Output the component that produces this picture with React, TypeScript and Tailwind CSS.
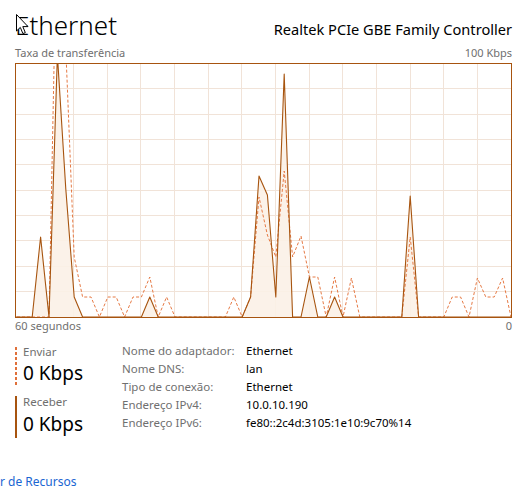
import React from 'react';

const W = 495;
const H = 253;
const STEP = 8.4;
const X0 = -9;

// px above the baseline, one sample per second (61 samples)
const RECV = [
  0, 0, 0, 0, 80, 0, 262, 128, 20, 0, 0, 0, 0, 0, 0, 0, 0, 20, 0, 0,
  0, 0, 0, 0, 0, 0, 0, 0, 0, 20, 141, 122, 20, 243, 0, 0, 40, 0, 0, 20,
  0, 0, 0, 0, 0, 0, 0, 0, 121, 0, 0, 0, 0, 0, 0, 0, 0, 0, 0, 0, 0,
];
const SEND = [
  0, 0, 0, 0, 0, 0, 420, 268, 60, 20, 20, 0, 20, 20, 0, 20, 20, 40, 0, 20,
  0, 0, 0, 0, 0, 0, 0, 20, 0, 20, 120, 82, 60, 146, 60, 81, 40, 40, 0, 40,
  0, 39, 0, 0, 0, 0, 0, 0, 80, 0, 0, 0, 0, 20, 20, 0, 39, 20, 20, 39, 0,
];

const pts = (vals: number[]) =>
  vals.map((v, i) => `${(X0 + STEP * i).toFixed(1)},${(H - v).toFixed(1)}`).join(' ');

const DETAILS: [string, string][] = [
  ['Nome do adaptador:', 'Ethernet'],
  ['Nome DNS:', 'lan'],
  ['Tipo de conexão:', 'Ethernet'],
  ['Endereço IPv4:', '10.0.10.190'],
  ['Endereço IPv6:', 'fe80::2c4d:3105:1e10:9c70%14'],
];

function Graph() {
  const recv = pts(RECV);
  return (
    <div className="h-[255px] border border-[#a7540f] bg-white">
      <svg width={W} height={H} className="block overflow-hidden">
        {/* grid */}
        {Array.from({ length: 9 }, (_, k) => {
          const y = Math.round(25.35 * (k + 1)) - 0.5;
          return <line key={'h' + k} x1={0} x2={W} y1={y} y2={y} stroke="#f1e3d8" strokeWidth={1} />;
        })}
        {Array.from({ length: 13 }, (_, j) => {
          const x = Math.round(58 + 33.67 * j) - 0.5;
          return <line key={'v' + j} x1={x} x2={x} y1={0} y2={H} stroke="#f1e3d8" strokeWidth={1} />;
        })}
        <polygon points={`${X0},${H} ${recv} ${X0 + STEP * 60},${H}`} fill="#fbf1e7" fillOpacity={0.9} />
        <polyline points={pts(SEND)} fill="none" stroke="#e67a45" strokeWidth={1} strokeDasharray="3 2" />
        <polyline points={recv} fill="none" stroke="#a7540f" strokeWidth={1.1} strokeLinejoin="round" />
      </svg>
    </div>
  );
}

function Cursor() {
  return (
    <svg width="13" height="21" viewBox="0 0 13 21" className="absolute left-[16px] top-[14px]">
      <path
        d="M0.5 0.5 L0.5 17 L4.3 13.4 L6.9 19.6 L9.3 18.6 L6.8 12.6 L12 12.6 Z"
        fill="#fff"
        stroke="#000"
        strokeWidth={1}
        strokeLinejoin="miter"
      />
    </svg>
  );
}

export default function App() {
  return (
    <div className="relative w-[531px] h-[500px] overflow-hidden bg-white font-['Noto_Sans','Liberation_Sans',sans-serif] text-black">
      <div className="pl-[15px] w-[512px]">
        {/* Header */}
        <div className="flex items-baseline justify-between pt-[8px]">
          <h1 className="text-[26px] leading-[34px] font-light">Ethernet</h1>
          <span className="text-[14.6px] leading-[20px]">Realtek PCIe GBE Family Controller</span>
        </div>
        <div className="mt-[3px] flex justify-between text-[11px] leading-[16px] text-[#6f6f6f]">
          <span>Taxa de transferência</span>
          <span>100 Kbps</span>
        </div>
        <div className="mt-[2px]">
          <Graph />
        </div>
        <div className="flex justify-between text-[11px] leading-[16px] text-[#6f6f6f]">
          <span>60 segundos</span>
          <span>0</span>
        </div>

        {/* Send / receive + properties */}
        <div className="mt-[6px] flex">
          <div className="w-[107px] pt-[7px] flex flex-col gap-[11px]">
            <div className="flex gap-[6px]">
              <div className="w-[2px] bg-[repeating-linear-gradient(to_bottom,#e0703a_0_3px,transparent_3px_5px)]" />
              <div className="pb-[1px]">
                <div className="text-[11.5px] leading-[10px] text-[#6f6f6f]">Enviar</div>
                <div className="mt-[5px] text-[19px] leading-[22px]">0 Kbps</div>
              </div>
            </div>
            <div className="flex gap-[6px]">
              <div className="w-[2px] bg-[#a7540f]" />
              <div className="pb-[3px]">
                <div className="text-[11.5px] leading-[10px] text-[#6f6f6f] pt-[1px]">Receber</div>
                <div className="mt-[6px] text-[19px] leading-[22px]">0 Kbps</div>
              </div>
            </div>
          </div>
          <div className="flex flex-col pt-[2px] text-[11.5px]">
            {DETAILS.map(([k, v]) => (
              <div key={k} className="flex h-[17.9px] leading-[17.9px]">
                <span className="w-[124px] text-[#6f6f6f]">{k}</span>
                <span>{v}</span>
              </div>
            ))}
          </div>
        </div>
      </div>

      <a className="block mt-[36px] text-[12px] leading-[16px] text-[#1a66d2]">r de Recursos</a>

      <Cursor />
    </div>
  );
}
